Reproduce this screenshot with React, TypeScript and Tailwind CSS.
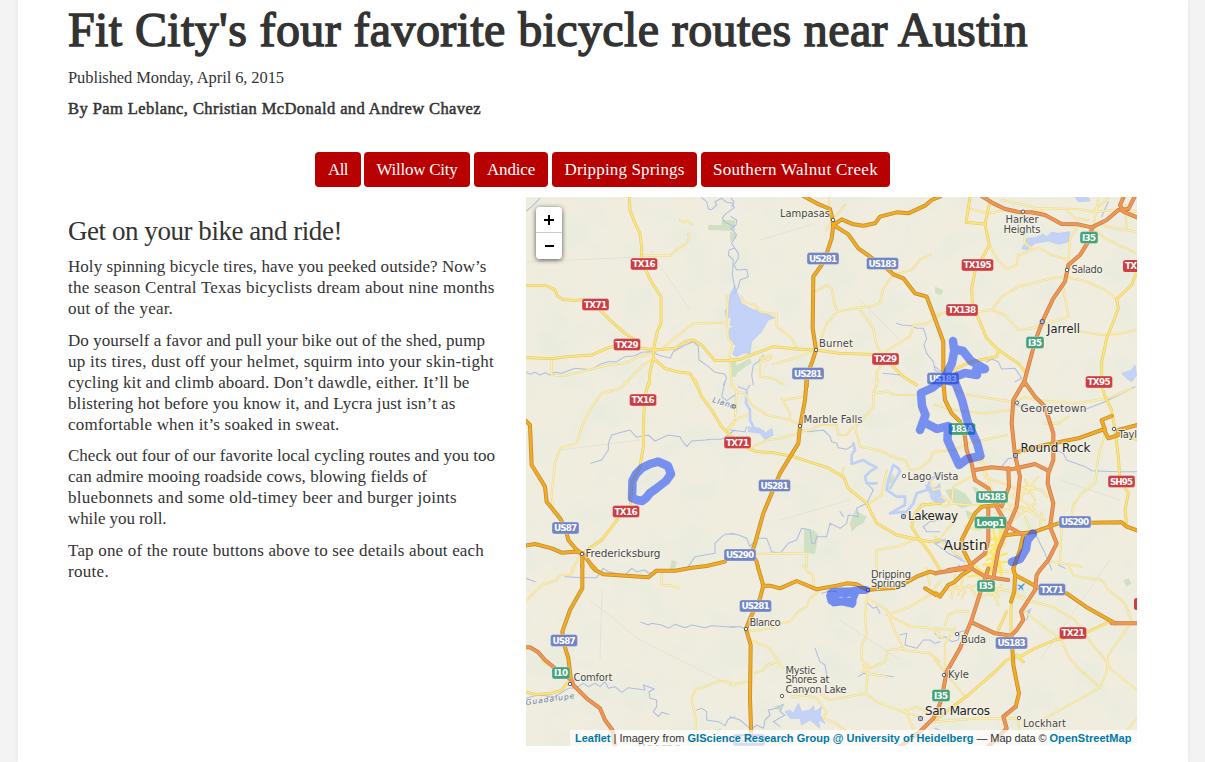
import { useLayoutEffect, useRef, useState } from "react";
import type { ReactNode } from "react";

/** A single line of type whose tracking is adjusted to fill a measure. */
function Fit({ w, children, className = "" }: { w: number; children: string; className?: string }) {
  const ref = useRef<HTMLSpanElement>(null);
  const [spacing, setSpacing] = useState(0);
  useLayoutEffect(() => {
    if (ref.current) {
      setSpacing((w - ref.current.getBoundingClientRect().width) / children.length);
    }
  }, [w, children]);
  return (
    <span ref={ref} className={`inline-block whitespace-pre ${className}`} style={{ letterSpacing: spacing }}>
      {children}
    </span>
  );
}

type Kind = "minor" | "state" | "us" | "motorway" | "stream" | "river" | "lake" | "green" | "city";
type Tile = { at: [number, number] } & Partial<Record<Kind, string[]>>;

const tiles: Tile[] = [
  {
    at: [525, 195],
    minor: ["350,182 435,182 460,160 480,150 493,130 490,115", "465,75 475,82 490,78 500,88", "80,491 80,540 115,543 250,510 300,505 340,485 385,475", "410,462 445,432 505,385 605,383 608,330 604,300", "605,383 610,430 622,450 613,480 620,570", "385,490 350,515 295,570"],
    state: ["313,3 315,45 328,80 345,115 350,160 350,195 357,215 380,262 408,305 408,385 397,410 385,465 385,490 375,530 372,570", "0,272 65,272 90,285 97,303 115,314 150,316 175,314 200,320", "225,345 260,380 300,415 330,435", "0,488 80,491 130,485 200,480 245,460 280,450 340,458 385,465 450,460 480,440 505,435 530,450 570,497 630,497", "385,490 420,520 455,530 495,535 515,570"],
    stream: ["3,530 15,538 30,532 45,540 60,533 75,540 90,532 110,535 150,520 200,524 225,508 250,500 275,500 300,485 330,482 350,472 385,470 400,480 435,490 445,470 480,450 505,440 520,455 522,495 550,515 570,532 600,538 605,550 595,570", "530,8 545,20 550,42 560,44 575,30 570,20 590,10 605,22 622,25 628,38 600,58 592,70 600,82 628,95", "628,160 612,165 610,180 625,195 622,240 630,280", "45,10 20,35 5,48"],
    lake: ["630,270 614,300 612,325 630,335", "630,395 615,400 610,425 630,450"],
    green: ["550,90 590,90 590,75 630,75 630,108 550,105", "618,500 634,500 634,545 622,545"],
  },
  {
    at: [730, 195],
    minor: ["297,8 297,35 308,75 290,105", "308,75 345,30", "258,288 290,270 305,280 312,320 322,350 350,345 385,338 420,335 450,325 460,280 490,240 510,235 545,225 570,195 600,178", "322,350 290,385 275,425 258,462", "388,340 430,400 437,440 445,460 455,478", "35,305 42,320 75,330 90,350 140,358 140,395 185,430 200,460", "455,475 540,425 550,392 590,385 630,362", "440,570 440,530 455,510", "258,465 200,488 130,508", "90,490 125,480 122,492 90,500 90,545 130,550 160,568"],
    state: ["0,495 30,493 90,470 130,455 200,462 258,465 330,475 430,478", "480,505 520,545 560,570"],
    us: ["220,3 260,25 300,42 308,75 310,90", "310,90 335,73 370,88 400,92 435,85 450,65 500,52 535,55 585,32 605,15 630,5", "310,90 305,130 290,175 275,210 250,245 248,400 258,465 245,505 230,540 230,575", "310,90 355,118 385,160 420,185 470,220 490,238 520,250 555,295 590,305 605,345 620,385 640,440 640,570"],
    stream: ["500,385 515,390 545,392 560,400 580,400 590,430 582,450 590,475 610,500 615,525 630,535", "460,535 510,540 540,555", "3,10 12,20 5,35", "3,65 20,75 18,90 3,100 20,120 5,145 25,175 25,190 12,210 20,225 50,223 55,245 30,255 25,275 15,295", "100,480 85,500 70,510 65,540 70,570"],
    lake: ["15,280 0,320 -15,350 -10,370 5,365 0,390 20,400 10,430 18,450 8,478 20,485 40,475 60,475 65,440 95,410 115,375 135,368 105,355 60,340 35,325 25,300"],
    green: ["0,110 15,115 20,130 0,140", "5,520 60,490 65,503 10,542"],
  },
  {
    at: [935, 195],
    minor: ["163,150 185,190 215,222 245,210 250,180 310,158 350,180 400,195", "0,360 40,350", "130,350 170,345 200,305 250,275 350,250 390,245 450,258 510,285 545,312", "170,345 210,360 250,405 290,400 400,365 385,280", "400,210 405,130 430,95", "475,100 510,130 550,150 605,175", "300,40 430,42 475,50 520,8", "200,15 290,35 320,48", "100,40 160,55 210,45", "475,97 490,8", "500,90 540,100 605,110", "570,30 575,100", "410,405 500,420 560,415 605,405", "265,105 270,145 290,160", "400,50 420,70 460,75", "480,50 550,45 605,50"],
    state: ["105,8 93,82 150,87 165,20", "150,87 163,150 120,230 110,280 112,325 130,370 155,430 190,465 250,505 270,530", "605,230 590,270 545,312 550,340 535,380 515,430 500,500 500,555", "190,468 185,485 110,500 65,520 50,545"],
    us: [],
    motorway: ["140,3 175,25 210,42 255,52 290,52 330,60 380,87 430,88 470,97 515,75 550,45 580,42 600,3", "565,8 555,30 565,50 608,68", "472,97 460,140 435,180 400,210 390,260 355,310 322,380 300,440 265,570"],
    stream: ["155,500 170,492 190,500 200,522 240,520 260,550 240,560", "0,515 30,540", "500,65 520,20"],
    lake: ["260,160 270,145 275,130 300,128 325,118 335,125 350,112 370,115 405,110 400,140 370,148 340,138 300,145 275,165", "420,8 460,8 465,18 430,20", "560,535 590,525 600,510 605,540 590,560 575,550"],
    green: ["0,275 25,285 20,300 0,295"],
  },
  {
    at: [525, 380],
    minor: ["310,5 285,25 230,40 205,75 190,100 170,140 155,190 105,205 90,250 80,340 85,400", "170,520 140,570", "605,150 630,120"],
    state: ["372,5 360,45 355,130 355,200 345,260 320,310 317,370", "280,415 230,480 200,500 175,520", "510,0 530,50 560,90 590,140 625,175"],
    us: ["0,120 15,135 20,255 60,320 65,365 105,415 120,440 130,480 155,510 170,520", "0,497 30,492 80,505 110,518 150,515 172,520 172,560", "172,520 195,550 212,568"],
    stream: ["197,250 230,240 250,210 250,190 260,165 290,157 315,150 335,172 370,165 390,183 430,165 465,170 470,180 485,200 500,183 540,180 560,178 590,178 630,150", "630,462 600,463 590,470 570,490 570,520 510,530 490,560", "600,5 590,50 605,62 630,45"],
    green: ["440,540 455,545 450,570 435,568"],
  },
  {
    at: [730, 380],
    minor: ["60,205 90,190 115,180 150,175 205,160", "5,10 20,35 45,40 65,75 110,105 180,120 210,135", "20,35 15,110", "0,145 25,115 55,105", "155,55 180,100 180,120", "160,60 220,50", "250,145 270,135 320,135 325,165 350,165 365,145 375,140 390,200 450,212 500,235 525,240 540,270 570,265 600,240 610,218 630,215", "445,0 430,40 430,80 405,110 375,140", "430,40 470,35 500,45 560,45", "410,375 455,345 460,320 470,270", "335,288 340,265", "75,522 180,520 230,520 230,560", "440,570 440,510 500,500 550,480", "600,300 610,330 630,325", "210,155 250,148"],
    state: ["55,205 80,215 130,218 190,230 230,243 290,262 340,290 355,325 410,370 440,430 500,465 570,480 600,485 630,480", "570,480 545,440 555,400 575,375 630,370", "570,480 600,520 630,570"],
    us: ["230,0 225,60 210,140 205,190 150,280 100,400 75,490 65,520 80,545 84,562"],
    stream: ["205,150 220,150 235,155 280,150 300,170 305,185 320,190 325,203 350,208 370,195", "410,310 430,330 410,370 380,385 385,410 355,405 350,430 330,445 300,430 290,470 260,470 255,490 245,490 240,450 215,445 200,480 175,490 150,520 125,515 110,475 80,475 60,500 50,475 25,465 0,460", "0,150 45,155 50,140", "25,20 50,30 60,15", "330,395 340,410", "630,420 600,425 580,440 590,455 630,455"],
    river: ["50,35 48,70 60,90 60,120 75,150 100,155", "370,190 375,210 365,225 365,252 400,240 415,250 440,262 420,275 405,290 410,310 440,310", "505,265 490,255 475,300 470,330 500,350 525,350 525,375 480,400 530,395 550,370 560,340 590,330 630,340", "505,265 510,275 480,325", "590,330 600,300 630,280"],
    lake: ["55,140 90,145 105,160 125,145 130,165 105,178 90,160 55,155", "585,315 615,325 630,310 630,370 605,360 600,340"],
    green: ["222,445 250,450 265,465 255,522 222,518", "375,390 410,410 400,430 380,440 365,455 360,430", "470,310 490,280 495,310"],
  },
  {
    at: [935, 380],
    minor: ["410,405 415,375 440,340 480,310 490,230 510,160", "0,75 60,90 150,100 230,90", "60,30 100,45 230,65", "240,65 270,50 300,60 420,70 520,55 590,25", "0,215 60,210 100,190 215,165", "330,130 370,130 400,110", "140,230 150,290 200,310 280,340", "200,340 260,360 300,390", "310,290 260,350 225,390", "180,400 240,380 300,400", "260,380 330,420", "220,430 300,370", "250,400 190,340", "150,310 160,350", "120,240 145,250 170,330", "260,320 320,330 335,350", "270,300 300,360", "215,350 300,320", "20,350 50,370 100,375 190,375", "0,370 30,380 50,370 55,320 110,290", "0,470 60,520 100,540", "375,540 380,440", "60,420 20,470", "270,410 290,460", "90,440 130,450 160,430", "320,400 315,440", "350,545 440,560"],
    state: ["495,0 510,50 530,90 540,150 550,230 555,300 580,340 570,390 575,430", "545,160 605,178"],
    city: ["175,450 185,500 165,570", "195,450 190,540 200,570", "150,500 210,490", "155,540 215,520", "205,440 175,570", "215,470 150,530", "180,470 205,500", "145,555 215,545", "160,475 190,480", "225,420 200,470", "170,520 190,560"],
    us: ["25,5 30,60 50,100 75,125 90,170", "240,218 330,195 430,175 500,150 510,150 500,120 530,108", "508,152 520,175 550,165 550,150 608,135", "215,465 300,455 370,430 560,427 575,440 608,452", "190,375 140,380 120,400 95,450 80,480 85,510 110,560", "265,465 255,510 235,565"],
    motorway: ["267,5 235,60 230,130 240,225 255,290 245,380 215,450 190,510 180,565", "268,5 300,50 330,80 355,160 355,240 340,280 338,310 355,370 345,440 365,490 340,540 315,570", "120,270 170,262 230,268 300,252 340,272", "90,170 95,210 110,250 120,300 160,325 190,390 220,440 265,465", "220,265 222,320 200,380", "160,380 160,480 150,520 100,560 40,570"],
    stream: ["360,210 385,220 395,240 450,260 470,272 550,275 605,275", "200,260 220,235 230,235", "240,75 330,90 350,78 440,92 510,65 600,20", "0,490 40,520 90,545", "300,460 330,520 350,570", "0,10 25,25"],
    river: ["0,490 30,480 40,500 80,540"],
    lake: ["0,350 20,345 30,365 5,375", "0,320 15,335 0,345"],
    green: ["30,330 60,325 90,340 115,375 80,385 50,365", "90,390 115,400 100,420", "110,320 130,325 125,345"],
  },
  {
    at: [525, 565],
    minor: ["410,20 410,60 440,62 463,70", "630,358 595,348 575,350 545,363 510,375 500,400 513,470 508,540", "50,290 70,300", "3,110 25,85 50,60 95,45 105,30 140,28 150,0"],
    state: ["0,380 30,388 80,385 110,375 130,350"],
    us: ["172,0 172,70 135,135 112,200 118,240 130,280 138,345", "197,0 210,15 235,28 370,37 395,17 450,17 500,8 545,3 600,-10"],
    motorway: ["0,247 15,247 40,262 60,285 90,310 140,345 145,360 185,400 225,430 240,465 262,495 270,545"],
    stream: ["120,35 180,38 215,38 235,10 250,20 300,30 320,10 335,20 360,15 370,25 390,20", "348,172 370,180 380,175 410,180 430,190 450,178 480,188 500,180 540,188 560,182 630,187", "3,400 40,390 90,395 130,370 155,368 175,355 190,365 210,355 225,365 240,350 250,370 270,365 290,382 310,368 360,375 355,360 388,372 372,380 375,400 395,405 395,425 385,440 400,455 410,442 430,448", "515,435 530,430 545,440 545,465 580,470 600,482 610,462 630,455", "3,40 30,50"],
    green: ["565,495 590,490 580,510"],
  },
  {
    at: [730, 565],
    minor: ["220,0 230,18 250,30 250,60", "265,80 240,100 230,125 205,140 180,170 150,175 130,190 48,200", "62,225 120,250 150,300 160,310", "145,290 110,300 100,315 75,325", "413,80 405,150 410,210 395,240 395,285 415,300 408,385 300,405 270,385", "408,385 440,410 520,440 570,455", "413,100 470,135 495,200 520,250 475,255 465,290 420,310 395,320", "470,150 540,125 600,90 630,50", "475,150 540,185 590,188 630,200", "520,255 600,265 630,290", "400,300 410,325 470,335", "185,395 230,392 260,400 290,440 280,460 310,470 350,500", "525,435 550,490", "520,440 560,425 590,440", "0,360 50,350", "590,10 600,60"],
    us: ["84,7 100,62 90,100 60,160 48,192 62,240 60,400 65,545", "100,62 120,62 150,70 200,48 260,73 320,62 350,55 380,58 413,75 440,72 500,68 560,35 600,20 618,25", "585,70 618,90"],
    motorway: ["510,545 570,500 610,460 625,430"],
    stream: ["413,115 430,130 440,125 450,145", "510,210 530,205 525,240 560,250 580,225 600,225 615,235 630,230", "255,250 270,290 285,300 290,330", "385,335 400,325 450,330 490,335", "62,495 80,480 100,490 105,465 120,450 115,435 140,430 160,418 150,440 165,450 130,470 150,485", "0,185 30,185 48,192", "275,85 300,78 320,80", "0,455 30,465 60,490"],
    lake: ["165,440 180,435 190,445 205,415 215,440 240,435 250,422 255,440 275,425 270,450 285,475 265,465 270,490 240,465 215,480 210,460 180,460"],
    green: ["130,425 150,420 155,440"],
  },
  {
    at: [935, 565],
    minor: ["270,140 300,165 380,225 400,275 430,310 495,367", "240,95 350,125 420,165 450,210 510,285 530,315 605,375", "400,0 415,30 430,35 500,45 520,75 570,115 590,170 520,270 515,320 495,367 330,460", "0,285 90,395", "30,310 30,235 60,190", "0,470 130,460 250,460 255,530", "605,460 580,490", "30,180 40,150 60,140 100,140", "100,60 130,100 180,80", "60,60 90,80 80,100", "170,60 190,120", "120,20 170,90", "40,75 130,60 190,95", "60,30 50,100", "90,20 70,90", "200,60 180,100", "5,210 25,220", "180,70 230,80 290,110", "0,190 50,195", "130,20 230,20"],
    state: ["232,100 228,130 228,200", "215,140 185,205", "520,172 450,205 360,225 300,250 260,272 215,285 180,320 100,390 0,465", "245,270 265,290"],
    city: ["110,10 150,30 180,10", "120,0 160,40", "170,0 150,60", "100,35 190,20", "190,0 200,30"],
    us: ["3,85 15,95 40,60 60,50 80,30 105,15", "235,10 240,30 300,62 320,75", "240,30 238,80 228,110", "395,85 460,130 500,152 540,175", "230,215 235,300 252,385 242,425"],
    motorway: ["160,10 140,70 110,165 75,250 35,320 20,400 10,430", "110,172 180,205 228,212 245,195 265,165 258,140 300,75 305,30 315,15", "0,25 60,15 110,10 150,35 220,45", "175,40 180,10", "530,175 608,175", "242,425 205,455 215,490 160,545"],
    stream: ["0,205 15,220 30,215 50,230 70,225 75,200 100,195", "275,165 285,135", "0,490 25,500 40,530", "370,0 390,10", "70,0 90,15"],
    lake: ["273,140 290,130 280,145"],
    green: ["565,45 580,40 590,55 575,65"],
  },
];

const layers: { kind: Kind; color: string; width: number }[] = [
  { kind: "stream", color: "#aebfe3", width: 3.2 },
  { kind: "river", color: "#bfcff5", width: 8 },
  { kind: "minor", color: "#ead795", width: 6.5 },
  { kind: "minor", color: "#fbf0b0", width: 3.5 },
  { kind: "city", color: "#fae865", width: 7 },
  { kind: "state", color: "#e5c766", width: 8.5 },
  { kind: "state", color: "#fbe57c", width: 5.5 },
  { kind: "us", color: "#bd8b35", width: 12 },
  { kind: "motorway", color: "#c57b43", width: 12 },
  { kind: "us", color: "#f4ab20", width: 7.5 },
  { kind: "motorway", color: "#f09653", width: 8 },
];

const shields: [string, number, number, string][] = [
  ["TX16", 644, 264, "#cf3c41"], ["TX71", 595.5, 304.5, "#cf3c41"], ["TX29", 627, 344.5, "#cf3c41"],
  ["TX16", 643, 400, "#cf3c41"], ["TX71", 737.5, 442.5, "#cf3c41"], ["TX16", 626, 511.5, "#cf3c41"],
  ["TX29", 885.5, 359, "#cf3c41"], ["TX195", 977.5, 265, "#cf3c41"], ["TX138", 962, 310, "#cf3c41"],
  ["TX95", 1099, 382, "#cf3c41"], ["SH95", 1121.5, 481.5, "#cf3c41"], ["TX21", 1073, 633, "#cf3c41"],
  ["US281", 823, 258.5, "#7285c6"], ["US183", 882.5, 263.5, "#7285c6"], ["US281", 808, 373.5, "#7285c6"],
  ["US183", 943, 378.5, "#7285c6"], ["US281", 774.5, 485.5, "#7285c6"], ["US290", 740, 555, "#7285c6"],
  ["US281", 755.5, 606, "#7285c6"], ["US87", 565.5, 528, "#7285c6"], ["US87", 564, 640.5, "#7285c6"],
  ["US290", 1075, 522, "#7285c6"], ["TX71", 1052, 589.5, "#7285c6"], ["US183", 1011.5, 643, "#7285c6"],
  ["US281", 749, 740, "#7285c6"],
  ["I35", 1089, 237.5, "#45a27b"], ["I35", 1035, 342.5, "#45a27b"], ["183A", 962, 429, "#45a27b"],
  ["US183", 992, 497, "#45a27b"], ["Loop1", 990.5, 522.5, "#45a27b"], ["I35", 986, 586, "#45a27b"],
  ["I35", 941, 695.5, "#45a27b"], ["I10", 561, 673, "#45a27b"],
];
const shieldWidth: Record<number, number> = { 3: 18, 4: 27, 5: 32 };

const towns: [string, number, number, number, number][] = [
  ["Lampasas", 780, 217, 50, 10], ["Harker", 1005.5, 223, 33, 10], ["Heights", 1003.5, 232.5, 37, 10],
  ["Salado", 1071.5, 273, 31, 10], ["Jarrell", 1047, 332.5, 33, 11.5], ["Burnet", 819, 347, 34, 10],
  ["Georgetown", 1020.5, 412, 66, 10.5], ["Round Rock", 1020.5, 451.5, 70, 12], ["Marble Falls", 803.5, 423, 59, 10],
  ["Lago Vista", 907.5, 479.5, 51, 10], ["Lakeway", 908, 520, 50, 12], ["Fredericksburg", 585.5, 557, 75, 10.5],
  ["Austin", 943.5, 550, 44, 14], ["Dripping", 871, 577.5, 40, 10], ["Springs", 871, 587, 35, 10],
  ["Blanco", 749.5, 626, 31, 10], ["Mystic", 785.5, 674, 30, 10], ["Shores at", 785.5, 683.3, 44, 10],
  ["Canyon Lake", 785.5, 692.7, 61, 10], ["Comfort", 573.5, 680.5, 39, 10], ["Buda", 961, 643, 25, 10],
  ["Kyle", 948, 677.5, 21, 10], ["San Marcos", 925, 715.3, 65, 12], ["Lockhart", 1023, 727, 43, 10],
  ["Tayl", 1118.5, 438, 18.5, 10], ["Boerne", 638, 751, 43, 11],
];

const dots: [number, number][] = [
  [833, 220], [1023, 211.7], [1067, 270], [816, 350], [1017, 402.7], [800, 426], [904, 476], [582, 554],
  [1114, 429], [868, 590], [746, 629], [782, 696], [957, 634], [944, 675], [1019, 718], [570, 684], [734, 406.5],
];
const bigDots: [number, number][] = [[1042.3, 321.7], [1015.5, 455.5], [903.5, 516.5], [920.5, 718.5]];

const rides = [
  "M658.3 461.7 L668 466 L671 474 L666 481 L657 488 L650 493 L646 498 L642 501 L637 500 L632 498 L632.5 481 L636 474 L642 468 L650 464 Z",
  "M953 341 L954 349 L963 351 L971 361 L985 369 L976 370 L977 375 L965 373 L952 378 L943 380 L946 375 L952 363 L954 352 M942 380 L932 388 L921 393 L922 406 L925.5 415 L920 430 M925.5 423 L937 429 L948 426 L947.5 440 L953 452 L959 465 L967 459 L980.5 456 L977 443 L968 423 L962 400 L955 382 L944 380",
  "M1033 533.5 L1027.5 540 L1026 549 L1020 559 L1012 562",
];

function RouteMap() {
  return (
    <svg className="block h-[549px] w-[611px]" viewBox="526 197 611 549">
      <defs>
        <filter id="terrain" x="0" y="0" width="100%" height="100%">
          <feTurbulence type="fractalNoise" baseFrequency="0.028" numOctaves="4" seed="8" />
          <feColorMatrix values="0 0 0 0 0.8  0 0 0 0 0.83  0 0 0 0 0.73  1.9 0 0 0 -0.78" />
        </filter>
      </defs>
      <rect x="526" y="197" width="611" height="549" fill="#f0eddf" />
      <rect x="526" y="197" width="611" height="549" filter="url(#terrain)" />
      {tiles.map((t, i) => (
        <g key={i} transform={`translate(${t.at[0]} ${t.at[1]}) scale(.33333)`}>
          {t.green?.map((d) => <polygon key={d} points={d} fill="#cfe0c3" />)}
          {t.lake?.map((d) => <polygon key={d} points={d} fill="#c3d2f6" strokeLinejoin="round" stroke="#b9caf0" strokeWidth="2" />)}
        </g>
      ))}
      <path
        fill="none" stroke="#deddd5" strokeWidth=".7"
        d="M526 262 L570 260 L641 257 M690 310 L650 250 M590 600 L640 640 L720 680 M760 240 L810 225 M860 300 L900 340 M560 450 L640 440 M1040 660 L1110 560 M1060 480 L1120 500 M600 660 L602 590 M840 620 L900 660 M780 520 L850 500"
      />
      {layers.map(({ kind, color, width }) =>
        tiles.map((t, i) => (
          <g
            key={`${kind}-${color}-${i}`}
            transform={`translate(${t.at[0]} ${t.at[1]}) scale(.33333)`}
            fill="none" stroke={color} strokeWidth={width} strokeLinejoin="round" strokeLinecap="round"
          >
            {t[kind]?.map((d) => <polyline key={d} points={d} />)}
          </g>
        )),
      )}
      <g stroke="#4d4d4d" strokeWidth=".9" fill="#fff">
        {dots.map(([x, y]) => <circle key={`${x}-${y}`} cx={x} cy={y} r="1.7" />)}
        {bigDots.map(([x, y]) => <rect key={`${x}-${y}`} x={x - 2} y={y - 2} width="4" height="4" rx="1" fill="#a6b4ea" />)}
      </g>
      <g fontFamily="DejaVu Sans, sans-serif" stroke="#f5f3e8" strokeWidth="2" strokeOpacity=".8" paintOrder="stroke" strokeLinejoin="round">
        {towns.map(([name, x, y, w, size]) => (
          <text key={name} x={x} y={y} fontSize={size} textLength={w} fill={size > 11 ? "#222" : "#484848"}>{name}</text>
        ))}
      </g>
      <g fontFamily="DejaVu Sans, sans-serif" fill="#6880ae" fontSize="7.5" fontStyle="italic">
        <text textLength="23" transform="translate(712 402) rotate(17)">Llano</text>
        <text textLength="49" transform="translate(526 705) rotate(-8)">Guadalupe</text>
      </g>
      <g fontFamily="DejaVu Sans, sans-serif" fontWeight="700" fontSize="8.8" textAnchor="middle" fill="#fff">
        {shields.map(([name, x, y, color]) => {
          const w = shieldWidth[name.length];
          return (
            <g key={`${name}-${x}`}>
              <rect x={x - w / 2} y={y - 6} width={w} height="12" rx="2.5" fill={color} stroke="#f3eee4" strokeOpacity=".45" strokeWidth=".8" />
              <text x={x} y={y + 3.2} textLength={w - 4}>{name}</text>
            </g>
          );
        })}
        <rect x="1123" y="260" width="20" height="12" rx="2.5" fill="#cf3c41" />
        <text x="1131" y="269.2" textLength="12">TX</text>
        <rect x="1134" y="598" width="20" height="12" rx="2.5" fill="#cf3c41" />
      </g>
      <g transform="translate(1016 582) scale(.42)" fill="#4b9bd1" stroke="#e8f3f8" strokeWidth=".8">
        <path d="M17.8 19.2 16 11l3.5-3.5C21 6 21.5 4 21 3c-1-.5-3 0-4.5 1.5L13 8 4.8 6.2c-.5-.1-.9.1-1.1.5l-.3.5c-.2.5-.1 1 .3 1.3L9 12l-2 3H4l-1 1 3 2 2 3 1-1v-3l3-2 3.5 5.3c.3.4.8.5 1.3.2l.5-.2c.4-.3.6-.7.5-1.2z" />
      </g>
      <g fill="none" stroke="#0033ff" strokeWidth="8.5" strokeLinecap="round" strokeLinejoin="round">
        {rides.map((d) => <path key={d} d={d} strokeOpacity=".5" />)}
      </g>
      <path
        fill="#0033ff" fillOpacity=".52" fillRule="evenodd"
        d="M826 596 L827.5 591 L831 588.5 L840 587.5 L850 587.5 L858 586 L866 586 Q871 587 870 592 L866 594 L859 594 L856.5 600 Q857 606 853 608 L842 605.5 L833 606.5 L828 603 Z M838 597.6 L841 596.8 L844 597.6 Z M846 597.4 L850 596.4 L851 597.6 Z"
      />
    </svg>
  );
}

const paragraphs: [string, number][][] = [
  [["Holy spinning bicycle tires, have you peeked outside? Now’s", 418.5], ["the season Central Texas bicyclists dream about nine months", 426.5], ["out of the year.", 105]],
  [["Do yourself a favor and pull your bike out of the shed, pump", 417], ["up its tires, dust off your helmet, squirm into your skin-tight", 426], ["cycling kit and climb aboard. Don’t dawdle, either. It’ll be", 401.5], ["blistering hot before you know it, and Lycra just isn’t as", 387.5], ["comfortable when it’s soaked in sweat.", 271.5]],
  [["Check out four of our favorite local cycling routes and you too", 427], ["can admire mooing roadside cows, blowing fields of", 359], ["bluebonnets and some old-timey beer and burger joints", 389], ["while you roll.", 98.5]],
  [["Tap one of the route buttons above to see details about each", 416], ["route.", 41]],
];

function RouteButton({ w, children, className }: { w: number; children: string; className: string }) {
  return (
    <button className={`h-[35px] rounded bg-[#b90000] text-center text-[17px] leading-[34px] text-white ${className}`}>
      <Fit w={w}>{children}</Fit>
    </button>
  );
}

function ZoomButton({ children, className = "" }: { children: ReactNode; className?: string }) {
  return <button className={`flex h-[26px] w-[26px] items-center justify-center bg-white ${className}`}>{children}</button>;
}

export default function App() {
  return (
    <div className="flex h-[762px] w-[1205px] justify-start overflow-hidden bg-[#f3f3f3] pl-[18px] font-['Liberation_Serif',serif] text-[#333]">
      <main className="h-[762px] w-[1170px] bg-white px-[50px] shadow-[0_0_5px_rgba(0,0,0,0.06)]">
        <h1 className="h-[67px] pt-[4px] text-[48px] leading-[52px] [-webkit-text-stroke:1.4px_#333]">
          <Fit w={960}>Fit City's four favorite bicycle routes near Austin</Fit>
        </h1>
        <p className="h-[31px] text-[16.5px] leading-[22px]"><Fit w={216}>Published Monday, April 6, 2015</Fit></p>
        <p className="h-[54px] text-[16.5px] leading-[22px] [-webkit-text-stroke:0.5px_#333]">
          <Fit w={413}>By Pam Leblanc, Christian McDonald and Andrew Chavez</Fit>
        </p>
        <nav className="flex justify-start pl-[247px]">
          <RouteButton w={20} className="mr-[3px] w-[46px]">All</RouteButton>
          <RouteButton w={81} className="mr-1 w-[106px]">Willow City</RouteButton>
          <RouteButton w={48} className="mr-1 w-[74px]">Andice</RouteButton>
          <RouteButton w={120} className="mr-1 w-[145px]">Dripping Springs</RouteButton>
          <RouteButton w={165} className="w-[189px]">Southern Walnut Creek</RouteButton>
        </nav>
        <div className="mt-[10px] flex">
          <section className="w-[458px] shrink-0 pt-[19px]">
            <h2 className="mb-[10px] h-[30px] text-[27px] leading-[30px]"><Fit w={274}>Get on your bike and ride!</Fit></h2>
            {paragraphs.map((lines) => (
              <p key={lines[0][0]} className="mb-[10.5px] text-[17px] leading-[21px]">
                {lines.map(([text, w]) => (
                  <span key={text} className="block h-[21px]"><Fit w={w}>{text}</Fit></span>
                ))}
              </p>
            ))}
          </section>
          <section className="relative h-[549px] w-[611px] shrink-0 overflow-hidden">
            <RouteMap />
            <div className="absolute top-[10px] left-[10px] overflow-hidden rounded shadow-[0_1px_5px_rgba(0,0,0,0.65)]">
              <ZoomButton className="border-b border-[#ccc]">
                <svg viewBox="0 0 10 10" className="h-[10px] w-[10px]"><path d="M5 0v10M0 5h10" stroke="#000" strokeWidth="2" /></svg>
              </ZoomButton>
              <ZoomButton>
                <svg viewBox="0 0 10 10" className="h-[10px] w-[10px]"><path d="M1 5h9" stroke="#000" strokeWidth="2" /></svg>
              </ZoomButton>
            </div>
            <div className="absolute right-0 bottom-0 flex h-[16px] w-[567px] items-center gap-[3px] bg-white/70 pl-[5px] font-['Liberation_Sans',sans-serif] text-[11px] leading-[16px]">
              <Fit w={35.5} className="font-bold text-[#0078a8]">Leaflet</Fit>
              <Fit w={71}>| Imagery from</Fit>
              <Fit w={286} className="font-bold text-[#0078a8]">GIScience Research Group @ University of Heidelberg</Fit>
              <Fit w={70}>— Map data ©</Fit>
              <Fit w={82} className="font-bold text-[#0078a8]">OpenStreetMap</Fit>
            </div>
          </section>
        </div>
      </main>
    </div>
  );
}
